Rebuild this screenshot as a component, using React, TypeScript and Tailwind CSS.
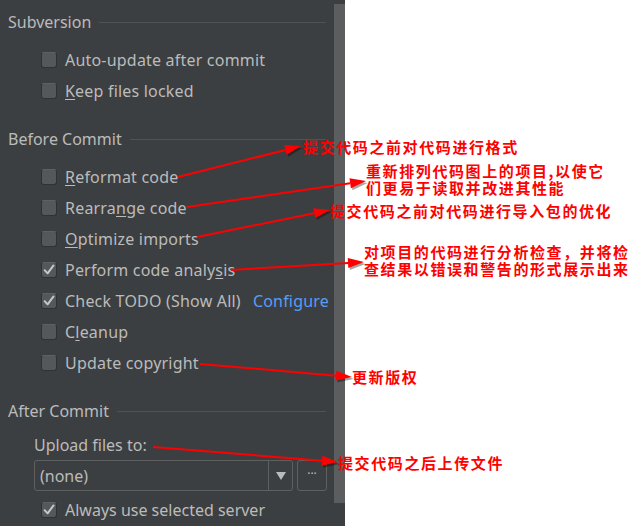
import React from 'react';

// --- Settings panel rows ---
type Row = { label: React.ReactNode; checked?: boolean; link?: string };

const u = (s: string) => <span className="underline underline-offset-2 decoration-1">{s}</span>;

const subversionRows: Row[] = [
  { label: 'Auto-update after commit' },
  { label: <>{u('K')}eep files locked</> },
];

const beforeRows: Row[] = [
  { label: <>{u('R')}eformat code</> },
  { label: <>Rearra{u('n')}ge code</> },
  { label: <>{u('O')}ptimize imports</> },
  { label: <>Perform code analy{u('s')}is</>, checked: true },
  { label: 'Check TODO (Show All)', checked: true, link: 'Configure' },
  { label: <>C{u('l')}eanup</> },
  { label: 'Update copyright' },
];

const Checkbox = ({ checked }: { checked?: boolean }) => (
  <div className="w-4 h-4 rounded-[3px] bg-[#55585a] border border-[#2f3133] border-t-[#5e6163] flex items-center justify-center shrink-0">
    {checked && (
      <svg viewBox="0 0 16 16" className="w-[14px] h-[14px]">
        <path d="M3 8.2 L6.4 11.8 L13.2 2.8" fill="none" stroke="#c9c9c9" strokeWidth="2.2" strokeLinecap="round" strokeLinejoin="round" />
      </svg>
    )}
  </div>
);

const CheckRow = ({ row }: { row: Row }) => (
  <div className="h-[31px] flex items-center gap-2 pl-[41px]">
    <Checkbox checked={row.checked} />
    <span className="text-[#bbbbbb] tracking-[0.2px]">{row.label}</span>
    {row.link && <span className="text-[#589df6] ml-1 tracking-[0.2px]">{row.link}</span>}
  </div>
);

const Header = ({ title }: { title: string }) => (
  <div className="flex items-center gap-2 pl-2 pr-2 h-[22px]">
    <span className="text-[#bbbbbb] whitespace-nowrap">{title}</span>
    <div className="flex-1 h-px bg-[#505355]" />
  </div>
);

// --- Red annotations ---
const notes: { x: number; y: number; lines: string[] }[] = [
  { x: 303, y: 138, lines: ['提交代码之前对代码进行格式'] },
  { x: 366, y: 162, lines: ['重新排列代码图上的项目,以使它', '们更易于读取并改进其性能'] },
  { x: 330, y: 202, lines: ['提交代码之前对代码进行导入包的优化'] },
  { x: 364, y: 243, lines: ['对项目的代码进行分析检查，并将检', '查结果以错误和警告的形式展示出来'] },
  { x: 352, y: 368, lines: ['更新版权'] },
  { x: 338, y: 454, lines: ['提交代码之后上传文件'] },
];

const arrows: [number, number, number, number][] = [
  [178, 177, 301, 146],
  [187, 207, 366, 181],
  [197, 237, 330, 210],
  [231, 270, 364, 262],
  [200, 364, 352, 377],
  [153, 447, 338, 462],
];

const Arrow = ({ a }: { a: [number, number, number, number] }) => {
  const [x1, y1, x2, y2] = a;
  const ang = Math.atan2(y2 - y1, x2 - x1);
  const len = 16;
  const w = 5;
  const bx = x2 - len * Math.cos(ang);
  const by = y2 - len * Math.sin(ang);
  const px = -Math.sin(ang) * w;
  const py = Math.cos(ang) * w;
  const pts = `${x2},${y2} ${bx + px},${by + py} ${bx - px},${by - py}`;
  return (
    <g>
      <polygon points={pts} transform="translate(1.5,2)" fill="rgba(0,0,0,0.35)" />
      <line x1={x1} y1={y1} x2={bx} y2={by} stroke="#ff0000" strokeWidth="2" />
      <polygon points={pts} fill="#ff0000" />
    </g>
  );
};

export default function App() {
  return (
    <div className="relative w-[643px] h-[526px] flex overflow-hidden bg-white font-['Noto_Sans',sans-serif] text-[16px]">
      {/* Settings panel */}
      <div className="w-[345px] h-full bg-[#3c3f41] flex">
        <div className="w-[334px] pt-[11px]">
          <Header title="Subversion" />
          <div className="pt-[11px]">
            {subversionRows.map((r, i) => <CheckRow key={i} row={r} />)}
          </div>
          <div className="pt-[22px]">
            <Header title="Before Commit" />
          </div>
          <div className="pt-[11px]">
            {beforeRows.map((r, i) => <CheckRow key={i} row={r} />)}
          </div>
          <div className="pt-[22px]">
            <Header title="After Commit" />
          </div>
          <div className="pl-[34px] pt-[11px] text-[#bbbbbb]">Upload files to:</div>
          <div className="flex gap-1 pl-[34px] pt-[3px]">
            <div className="w-[259px] h-[31px] border border-[#5e6060] rounded-[3px] flex items-stretch">
              <div className="flex-1 flex items-center pl-[5px] text-[#bbbbbb]">(none)</div>
              <div className="w-[24px] border-l border-[#5e6060] flex items-center justify-center">
                <svg viewBox="0 0 10 8" className="w-[10px] h-[8px]"><path d="M0 0 H10 L5 8 Z" fill="#bbbbbb" /></svg>
              </div>
            </div>
            <div className="w-[30px] h-[31px] border border-[#5e6060] rounded-[3px] flex items-center justify-center text-[#bbbbbb] text-[12px] pb-[4px]">
              ···
            </div>
          </div>
          <div className="h-[38px] flex items-center gap-2 pl-[41px]">
            <Checkbox checked />
            <span className="text-[#bbbbbb]">Always use selected server</span>
          </div>
        </div>
        <div className="w-[11px] mt-[4px] h-[499px] bg-[#5b5d5f]" />
      </div>
      <div className="flex-1 bg-white" />

      {/* Annotations */}
      <svg className="absolute inset-0 pointer-events-none" width="643" height="526">
        {arrows.map((a, i) => <Arrow key={i} a={a} />)}
      </svg>
      {notes.map((n, i) => (
        <div
          key={i}
          className="absolute text-[#ff0000] font-bold text-[15px] leading-[17px] tracking-[1.6px] whitespace-nowrap font-['Noto_Sans_CJK_SC',sans-serif]"
          style={{ left: n.x, top: n.y }}
        >
          {n.lines.map((l, j) => <div key={j}>{l}</div>)}
        </div>
      ))}
    </div>
  );
}
